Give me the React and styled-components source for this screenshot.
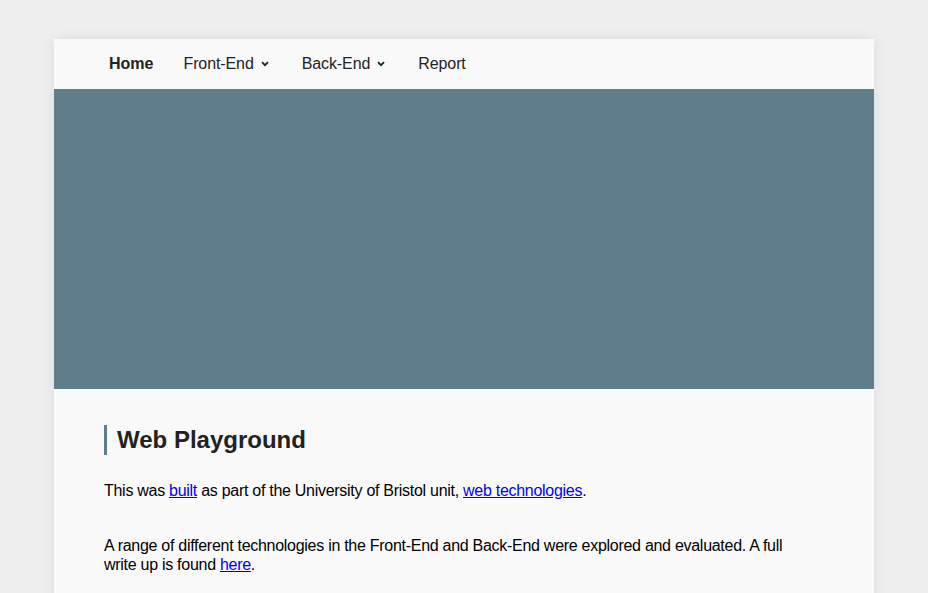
import styled, { createGlobalStyle } from 'styled-components';

const GlobalStyle = createGlobalStyle`
  html, body {
    margin: 0;
    padding: 0;
    background: #eeeeee;
    font-family: "Liberation Sans", Arial, sans-serif;
  }
`;

const Page = styled.div`
  padding-top: 39px;
  display: flex;
  justify-content: center;
`;

const Card = styled.div`
  width: 820px;
  background: #f9f9f9;
  box-shadow: 0 0 12px rgba(0, 0, 0, 0.08);
`;

const Nav = styled.nav`
  height: 50px;
  display: flex;
  align-items: center;
  padding-left: 40px;
`;

const NavItem = styled.a`
  display: flex;
  align-items: center;
  padding: 0 15px;
  font-size: 16px;
  letter-spacing: ${(p) => (p.$active ? '0' : '-0.1px')};
  color: #222;
  font-weight: ${(p) => (p.$active ? 700 : 400)};
  margin-right: ${(p) => (p.$drop ? '3px' : '0')};
  cursor: pointer;
`;

const Chevron = styled.svg`
  margin-left: 7px;
  width: 8px;
  height: 6px;
`;

const Hero = styled.div`
  height: 300px;
  background: #607d8b;
`;

const Content = styled.main`
  padding: 36px 50px 40px;
`;

const Title = styled.h1`
  margin: 0 0 26px;
  border-left: 3px solid #607d8b;
  padding-left: 10px;
  font-size: 24px;
  line-height: 30px;
  color: #222;
`;

const Text = styled.p`
  margin: 0 0 36px;
  max-width: 700px;
  font-size: 16px;
  line-height: 19px;
  letter-spacing: -0.28px;
  color: #000;

  a {
    color: #0000ee;
  }
`;

const DownIcon = () => (
  <Chevron viewBox="0 0 8 6">
    <path d="M1 1.2 L4 4.2 L7 1.2" fill="none" stroke="#222" strokeWidth="1.8" />
  </Chevron>
);

export default function App() {
  return (
    <>
      <GlobalStyle />
      <Page>
        <Card>
          <Nav>
            <NavItem $active>Home</NavItem>
            <NavItem $drop>
              Front-End
              <DownIcon />
            </NavItem>
            <NavItem $drop>
              Back-End
              <DownIcon />
            </NavItem>
            <NavItem>Report</NavItem>
          </Nav>
          <Hero />
          <Content>
            <Title>Web Playground</Title>
            <Text>
              This was <a href="#">built</a> as part of the University of Bristol unit,{' '}
              <a href="#">web technologies</a>.
            </Text>
            <Text>
              A range of different technologies in the Front-End and Back-End were explored and
              evaluated. A full write up is found <a href="#">here</a>.
            </Text>
          </Content>
        </Card>
      </Page>
    </>
  );
}
